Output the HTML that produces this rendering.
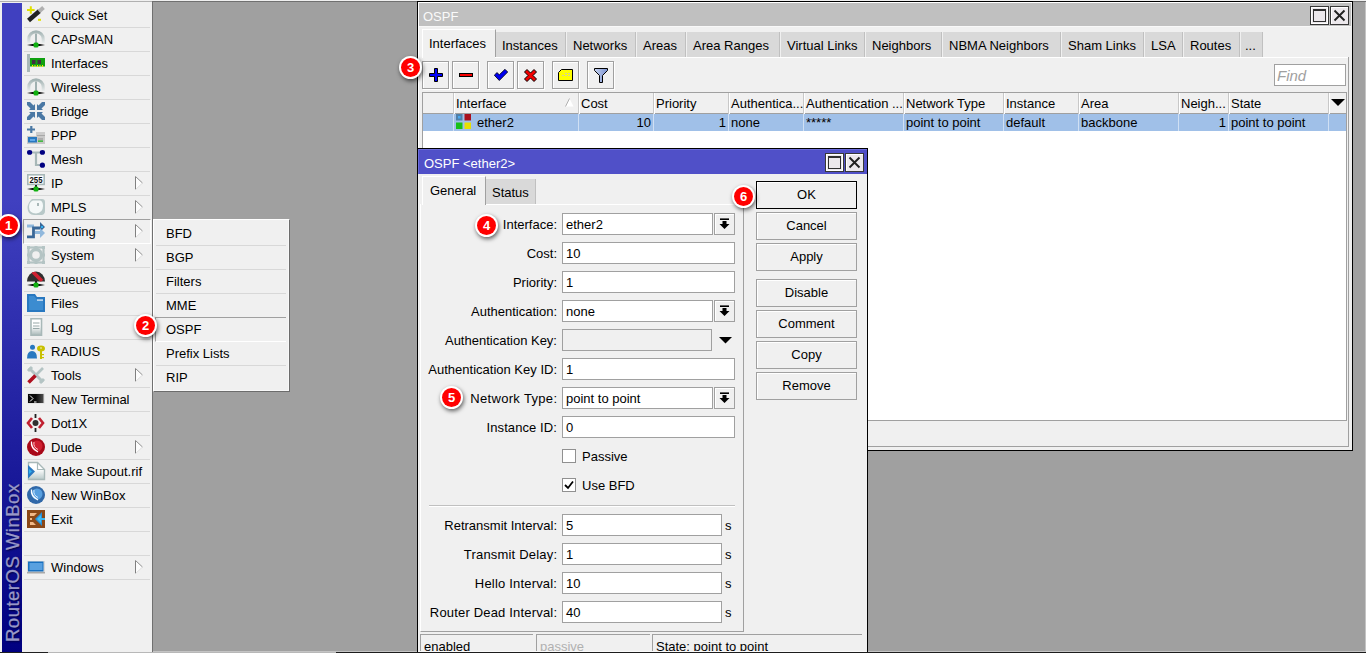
<!DOCTYPE html>
<html><head><meta charset="utf-8"><style>
*{box-sizing:border-box;margin:0;padding:0}
html,body{width:1366px;height:653px;overflow:hidden}
body{position:relative;background:#f0f0f0;font-family:"Liberation Sans",sans-serif;font-size:13px;color:#000}
.a{position:absolute}
.t{position:absolute;white-space:nowrap;line-height:15px}
svg{position:absolute;overflow:visible}
</style></head><body>
<div class="a" style="left:0px;top:1px;width:152px;height:1px;background:#b0b0b0"></div>
<div class="a" style="left:2px;top:3px;width:20px;height:650px;background:linear-gradient(to bottom,#4040c0 0px,#4040c0 197px,#000080 650px)"></div>
<div class="t" style="left:3px;top:642px;width:200px;height:20px;transform:rotate(-90deg);transform-origin:0 0;color:#9898c8;-webkit-text-stroke:0.3px #9898c8;text-shadow:-1px 1px 2px #000038;font-size:18.5px;letter-spacing:0.5px;line-height:20px">RouterOS WinBox</div>
<div class="a" style="left:24px;top:27px;width:126px;height:1px;background:#d8d8d8"></div>
<div class="t" style="left:51px;top:8px;">Quick Set</div>
<svg style="left:27px;top:6px" width="18" height="18" viewBox="0 0 18 18"><path d="M3.8 0.3V7.7M0 4H7.6" stroke="#e0e000" stroke-width="2"/><path d="M1.5 14.5 L12.5 5" stroke="#202020" stroke-width="4.5"/><path d="M12 5.5 L16.5 1.5" stroke="#b0b0b0" stroke-width="4"/><path d="M11 13.8H14" stroke="#e0e000" stroke-width="2"/></svg>
<div class="a" style="left:24px;top:51px;width:126px;height:1px;background:#d8d8d8"></div>
<div class="t" style="left:51px;top:32px;">CAPsMAN</div>
<svg style="left:27px;top:30px" width="18" height="18" viewBox="0 0 18 18"><defs><linearGradient id="barant" x1="0" x2="1"><stop offset="0" stop-color="#000" stop-opacity="0"/><stop offset="0.3" stop-color="#101010"/><stop offset="0.7" stop-color="#101010"/><stop offset="1" stop-color="#000" stop-opacity="0"/></linearGradient><linearGradient id="arc" x1="0" y1="0" x2="0" y2="1"><stop offset="0" stop-color="#a4b4b4"/><stop offset="1" stop-color="#e8ecec"/></linearGradient></defs><path d="M1.8 13 V9 A7.2 7.2 0 0 1 16.2 9 V13" fill="none" stroke="url(#arc)" stroke-width="3"/><rect x="8" y="3.5" width="2" height="10" fill="#a0b0b0"/><rect x="0" y="14" width="18" height="2" fill="url(#barant)"/><rect x="6.5" y="12.5" width="5" height="5" rx="1.5" fill="#10b010"/></svg>
<div class="a" style="left:24px;top:75px;width:126px;height:1px;background:#d8d8d8"></div>
<div class="t" style="left:51px;top:56px;">Interfaces</div>
<svg style="left:27px;top:54px" width="18" height="18" viewBox="0 0 18 18"><rect x="0" y="0" width="3" height="18" fill="#a8b8b8"/><rect x="3" y="4" width="15" height="8.5" fill="#10a010"/><rect x="5" y="6" width="3.5" height="4" fill="#403040"/><rect x="10.5" y="6" width="3.5" height="4" fill="#403040"/><path d="M5.5 11v2M8 11v2M10.5 11v2M13 11v2M15.5 11v2" stroke="#f0f000" stroke-width="1"/></svg>
<div class="a" style="left:24px;top:99px;width:126px;height:1px;background:#d8d8d8"></div>
<div class="t" style="left:51px;top:80px;">Wireless</div>
<svg style="left:27px;top:78px" width="18" height="18" viewBox="0 0 18 18"><defs><linearGradient id="barant" x1="0" x2="1"><stop offset="0" stop-color="#000" stop-opacity="0"/><stop offset="0.3" stop-color="#101010"/><stop offset="0.7" stop-color="#101010"/><stop offset="1" stop-color="#000" stop-opacity="0"/></linearGradient><linearGradient id="arc" x1="0" y1="0" x2="0" y2="1"><stop offset="0" stop-color="#a4b4b4"/><stop offset="1" stop-color="#e8ecec"/></linearGradient></defs><path d="M1.8 13 V9 A7.2 7.2 0 0 1 16.2 9 V13" fill="none" stroke="url(#arc)" stroke-width="3"/><rect x="8" y="3.5" width="2" height="10" fill="#a0b0b0"/><rect x="0" y="14" width="18" height="2" fill="url(#barant)"/><rect x="6.5" y="12.5" width="5" height="5" rx="1.5" fill="#10b010"/></svg>
<div class="a" style="left:24px;top:123px;width:126px;height:1px;background:#d8d8d8"></div>
<div class="t" style="left:51px;top:104px;">Bridge</div>
<svg style="left:27px;top:102px" width="18" height="18" viewBox="0 0 18 18"><g fill="#4a78a4"><path d="M0 0H3L8 5V8H5L0 3Z"/><path d="M8 2V8H2Z"/><path d="M18 0H15L10 5V8H13L18 3Z"/><path d="M10 2V8H16Z"/><path d="M0 18H3L8 13V10H5L0 15Z"/><path d="M8 16V10H2Z"/><path d="M18 18H15L10 13V10H13L18 15Z"/><path d="M10 16V10H16Z"/></g></svg>
<div class="a" style="left:24px;top:147px;width:126px;height:1px;background:#d8d8d8"></div>
<div class="t" style="left:51px;top:128px;">PPP</div>
<svg style="left:27px;top:126px" width="18" height="18" viewBox="0 0 18 18"><path d="M0 3.5H8M4.3 0V7" stroke="#4a78a4" stroke-width="2.2"/><rect x="9" y="6" width="9" height="12" fill="#cccccc"/><rect x="10" y="9" width="8" height="2" fill="#a8a8a8"/><rect x="0" y="10" width="18" height="8" fill="#c8c8c8"/><rect x="1" y="11" width="9" height="5.5" fill="#2878c0"/><rect x="3" y="13" width="5" height="2" fill="#60a8e8"/><rect x="11" y="12.5" width="5" height="1" fill="#909090"/><rect x="11" y="14.5" width="5" height="1.2" fill="#10b010"/></svg>
<div class="a" style="left:24px;top:171px;width:126px;height:1px;background:#d8d8d8"></div>
<div class="t" style="left:51px;top:152px;">Mesh</div>
<svg style="left:27px;top:150px" width="18" height="18" viewBox="0 0 18 18"><path d="M4 2.5H14M9 2.5V15H14" fill="none" stroke="#a8b8b8" stroke-width="2.2"/><ellipse cx="2.6" cy="2.4" rx="2.6" ry="2.4" fill="#000080"/><ellipse cx="15.4" cy="2.4" rx="2.6" ry="2.4" fill="#000080"/><ellipse cx="15.4" cy="15.2" rx="2.6" ry="2.6" fill="#000080"/></svg>
<div class="a" style="left:24px;top:195px;width:126px;height:1px;background:#d8d8d8"></div>
<div class="t" style="left:51px;top:176px;">IP</div>
<svg style="left:27px;top:174px" width="18" height="18" viewBox="0 0 18 18"><defs><linearGradient id="barip" x1="0" x2="1"><stop offset="0" stop-color="#000" stop-opacity="0"/><stop offset="0.3" stop-color="#101010"/><stop offset="0.7" stop-color="#101010"/><stop offset="1" stop-color="#000" stop-opacity="0"/></linearGradient></defs><rect x="0.8" y="0.8" width="16.4" height="9.6" fill="#fff" stroke="#a8b8b8" stroke-width="1.6"/><text x="9" y="8.6" font-family="Liberation Sans" font-size="9.5" font-weight="bold" text-anchor="middle" fill="#101010" textLength="13" lengthAdjust="spacingAndGlyphs">255</text><rect x="8" y="11" width="2" height="3" fill="#202020"/><rect x="0" y="14" width="18" height="2" fill="url(#barip)"/><rect x="6.5" y="12.5" width="5" height="5" rx="1.5" fill="#10b010"/></svg>
<svg style="left:135px;top:176px" width="8" height="15" viewBox="0 0 8 15"><path d="M0.5 0.5 L7.5 7 L0.5 13.5 Z" fill="#fcfcfc"/><path d="M0.5 0.5 V13.5" stroke="#808080" stroke-width="1"/><path d="M0.5 0.5 L7.5 7" stroke="#909090" stroke-width="1"/><path d="M0.5 13.5 L7.5 7" stroke="#e0e0e0" stroke-width="1"/></svg>
<div class="a" style="left:24px;top:219px;width:126px;height:1px;background:#d8d8d8"></div>
<div class="t" style="left:51px;top:200px;">MPLS</div>
<svg style="left:27px;top:198px" width="18" height="18" viewBox="0 0 18 18"><path d="M5 1H15Q18 1 18 4V13Q18 16 15 17H7Q1 17 0.5 10Q0.5 5 5 1Z" fill="#b8c8c8"/><path d="M6 2.5H13Q16 3 16 8Q16 15 9 15.5Q2 15 2 9Q2 4 6 2.5Z" fill="#f4f8f8"/><rect x="10" y="5" width="2" height="3" fill="#a8b8b8"/></svg>
<svg style="left:135px;top:200px" width="8" height="15" viewBox="0 0 8 15"><path d="M0.5 0.5 L7.5 7 L0.5 13.5 Z" fill="#fcfcfc"/><path d="M0.5 0.5 V13.5" stroke="#808080" stroke-width="1"/><path d="M0.5 0.5 L7.5 7" stroke="#909090" stroke-width="1"/><path d="M0.5 13.5 L7.5 7" stroke="#e0e0e0" stroke-width="1"/></svg>
<div class="a" style="left:24px;top:243px;width:126px;height:1px;background:#d8d8d8"></div>
<div class="t" style="left:51px;top:224px;">Routing</div>
<svg style="left:27px;top:222px" width="18" height="18" viewBox="0 0 18 18"><rect x="0" y="2.5" width="7" height="3" fill="#90b8dc"/><path d="M0 14.8H6.5V6H14" fill="none" stroke="#3a6898" stroke-width="2.8"/><path d="M13 0V10L18 5Z" fill="#3a6898"/><path d="M8 10.5H14" stroke="#90b8dc" stroke-width="3"/><path d="M13 6V16L18 11Z" fill="#90b8dc"/><rect x="14" y="4" width="2" height="2" fill="#30b0f0"/></svg>
<svg style="left:135px;top:224px" width="8" height="15" viewBox="0 0 8 15"><path d="M0.5 0.5 L7.5 7 L0.5 13.5 Z" fill="#fcfcfc"/><path d="M0.5 0.5 V13.5" stroke="#808080" stroke-width="1"/><path d="M0.5 0.5 L7.5 7" stroke="#909090" stroke-width="1"/><path d="M0.5 13.5 L7.5 7" stroke="#e0e0e0" stroke-width="1"/></svg>
<div class="a" style="left:24px;top:267px;width:126px;height:1px;background:#d8d8d8"></div>
<div class="t" style="left:51px;top:248px;">System</div>
<svg style="left:27px;top:246px" width="18" height="18" viewBox="0 0 18 18"><g fill="none" stroke="#b4c4c4"><circle cx="9" cy="9" r="5.5" stroke-width="3.4"/><rect x="1.5" y="1.5" width="15" height="15" stroke-width="2.2"/></g><g fill="#b4c4c4"><rect x="0" y="0" width="3" height="3"/><rect x="15" y="0" width="3" height="3"/><rect x="0" y="15" width="3" height="3"/><rect x="15" y="15" width="3" height="3"/><rect x="7.5" y="0" width="3" height="2"/><rect x="7.5" y="16" width="3" height="2"/><rect x="0" y="7.5" width="2" height="3"/><rect x="16" y="7.5" width="2" height="3"/></g></svg>
<svg style="left:135px;top:248px" width="8" height="15" viewBox="0 0 8 15"><path d="M0.5 0.5 L7.5 7 L0.5 13.5 Z" fill="#fcfcfc"/><path d="M0.5 0.5 V13.5" stroke="#808080" stroke-width="1"/><path d="M0.5 0.5 L7.5 7" stroke="#909090" stroke-width="1"/><path d="M0.5 13.5 L7.5 7" stroke="#e0e0e0" stroke-width="1"/></svg>
<div class="a" style="left:24px;top:291px;width:126px;height:1px;background:#d8d8d8"></div>
<div class="t" style="left:51px;top:272px;">Queues</div>
<svg style="left:27px;top:270px" width="18" height="18" viewBox="0 0 18 18"><defs><linearGradient id="barq" x1="0" x2="1"><stop offset="0" stop-color="#000" stop-opacity="0"/><stop offset="0.3" stop-color="#101010"/><stop offset="0.7" stop-color="#101010"/><stop offset="1" stop-color="#000" stop-opacity="0"/></linearGradient><clipPath id="qc"><path d="M0 11.5 A9 10 0 0 1 18 11.5Z"/></clipPath></defs><path d="M0 11.5 A9 10 0 0 1 18 11.5Z" fill="#303030"/><g clip-path="url(#qc)"><path d="M5 1 L15 11" stroke="#d02030" stroke-width="3.6"/></g><rect x="8" y="11" width="2" height="3" fill="#202020"/><rect x="0" y="14" width="18" height="2" fill="url(#barq)"/><rect x="6.5" y="12.5" width="5" height="5" rx="1.5" fill="#10b010"/></svg>
<div class="a" style="left:24px;top:315px;width:126px;height:1px;background:#d8d8d8"></div>
<div class="t" style="left:51px;top:296px;">Files</div>
<svg style="left:27px;top:294px" width="18" height="18" viewBox="0 0 18 18"><path d="M0 0H8L10 3H18V18H0Z" fill="#2878c0"/><path d="M2 2H7L9.5 5H16V16H2Z" fill="#3c8cd0"/><rect x="10" y="5.5" width="6" height="1.2" fill="#e8f0f8"/></svg>
<div class="a" style="left:24px;top:339px;width:126px;height:1px;background:#d8d8d8"></div>
<div class="t" style="left:51px;top:320px;">Log</div>
<svg style="left:27px;top:318px" width="18" height="18" viewBox="0 0 18 18"><defs><linearGradient id="lg" x1="0" y1="0" x2="0" y2="1"><stop offset="0.45" stop-color="#fff"/><stop offset="1" stop-color="#a8b8b8"/></linearGradient></defs><path d="M4 0.8H14.5V17.2H4Z" fill="url(#lg)" stroke="#a8b8b8" stroke-width="1.6"/><path d="M6 5H12.5M6 8H12.5M6 10.5H12.5" stroke="#98a8a8" stroke-width="1.2"/></svg>
<div class="a" style="left:24px;top:363px;width:126px;height:1px;background:#d8d8d8"></div>
<div class="t" style="left:51px;top:344px;">RADIUS</div>
<svg style="left:27px;top:342px" width="18" height="18" viewBox="0 0 18 18"><circle cx="5.5" cy="5.2" r="2.5" fill="#2878c0"/><path d="M0 16.5Q0 9 5 9Q10 9 10 16.5Z" fill="#2878c0"/><ellipse cx="14" cy="6.5" rx="4" ry="3" fill="#c8c000"/><rect x="13" y="8" width="2" height="9" fill="#c8c000"/><rect x="15" y="12" width="2" height="1.2" fill="#c8c000"/><rect x="15" y="15" width="2" height="1.2" fill="#c8c000"/><rect x="13" y="5.5" width="2" height="1" fill="#f0f0c0"/></svg>
<div class="a" style="left:24px;top:387px;width:126px;height:1px;background:#d8d8d8"></div>
<div class="t" style="left:51px;top:368px;">Tools</div>
<svg style="left:27px;top:366px" width="18" height="18" viewBox="0 0 18 18"><path d="M2 2 L16 16" stroke="#b4c4c4" stroke-width="3"/><path d="M16 2 L2 16" stroke="#b4c4c4" stroke-width="2.6"/><path d="M1 5 L5 1 M13 17 L17 13" stroke="#b4c4c4" stroke-width="3"/><path d="M1.5 16.5 L8.5 9.5" stroke="#b01020" stroke-width="3.6"/></svg>
<svg style="left:135px;top:368px" width="8" height="15" viewBox="0 0 8 15"><path d="M0.5 0.5 L7.5 7 L0.5 13.5 Z" fill="#fcfcfc"/><path d="M0.5 0.5 V13.5" stroke="#808080" stroke-width="1"/><path d="M0.5 0.5 L7.5 7" stroke="#909090" stroke-width="1"/><path d="M0.5 13.5 L7.5 7" stroke="#e0e0e0" stroke-width="1"/></svg>
<div class="a" style="left:24px;top:411px;width:126px;height:1px;background:#d8d8d8"></div>
<div class="t" style="left:51px;top:392px;">New Terminal</div>
<svg style="left:27px;top:390px" width="18" height="18" viewBox="0 0 18 18"><rect x="0.5" y="3.5" width="17" height="10" fill="#d8d8d8"/><defs><linearGradient id="tg" x1="0" x2="1"><stop offset="0.5" stop-color="#080808"/><stop offset="1" stop-color="#505050"/></linearGradient></defs><rect x="1" y="4" width="15.5" height="9" fill="url(#tg)"/><path d="M3 5.5L6 8.5L3 11.5M7 12H9.5" fill="none" stroke="#fff" stroke-width="1"/></svg>
<div class="a" style="left:24px;top:435px;width:126px;height:1px;background:#d8d8d8"></div>
<div class="t" style="left:51px;top:416px;">Dot1X</div>
<svg style="left:27px;top:414px" width="18" height="18" viewBox="0 0 18 18"><path d="M5 4L1 9L5 14" fill="none" stroke="#c02030" stroke-width="2.6"/><path d="M12 4L16 9L12 14" fill="none" stroke="#c02030" stroke-width="2.6"/><path d="M8.5 0V4M8.5 14V18" stroke="#202020" stroke-width="1.8"/><circle cx="8.5" cy="9" r="3" fill="#303030"/></svg>
<div class="a" style="left:24px;top:459px;width:126px;height:1px;background:#d8d8d8"></div>
<div class="t" style="left:51px;top:440px;">Dude</div>
<svg style="left:27px;top:438px" width="18" height="18" viewBox="0 0 18 18"><circle cx="9" cy="9" r="9" fill="#a80818"/><circle cx="10" cy="8" r="5.5" fill="#d02030"/><path d="M4.5 3.5Q3.5 10 11 14" fill="none" stroke="#fff" stroke-width="1.3"/><path d="M7 4Q6 9 11 11.5" fill="none" stroke="#f8c0c0" stroke-width="1"/></svg>
<svg style="left:135px;top:440px" width="8" height="15" viewBox="0 0 8 15"><path d="M0.5 0.5 L7.5 7 L0.5 13.5 Z" fill="#fcfcfc"/><path d="M0.5 0.5 V13.5" stroke="#808080" stroke-width="1"/><path d="M0.5 0.5 L7.5 7" stroke="#909090" stroke-width="1"/><path d="M0.5 13.5 L7.5 7" stroke="#e0e0e0" stroke-width="1"/></svg>
<div class="a" style="left:24px;top:483px;width:126px;height:1px;background:#d8d8d8"></div>
<div class="t" style="left:51px;top:464px;">Make Supout.rif</div>
<svg style="left:27px;top:462px" width="18" height="18" viewBox="0 0 18 18"><defs><linearGradient id="sg" x1="0" y1="0" x2="0" y2="1"><stop offset="0.4" stop-color="#fff"/><stop offset="1" stop-color="#b8c8c8"/></linearGradient></defs><path d="M1.5 0.5H10.5L17.5 7.5V17.5H1.5Z" fill="url(#sg)" stroke="#a8b8b8" stroke-width="1.4"/><path d="M10.5 0.5V7.5H17.5" fill="none" stroke="#a8b8b8" stroke-width="1.2"/><path d="M1 3L8 9.5L1 16.5Z" fill="#2878c0"/><path d="M2 7L5 9.5L2 12Z" fill="#30b0f0"/></svg>
<div class="a" style="left:24px;top:507px;width:126px;height:1px;background:#d8d8d8"></div>
<div class="t" style="left:51px;top:488px;">New WinBox</div>
<svg style="left:27px;top:486px" width="18" height="18" viewBox="0 0 18 18"><circle cx="9" cy="9" r="9" fill="#3068a8"/><circle cx="10" cy="8" r="5.5" fill="#58a0e0"/><path d="M4.5 3.5Q3.5 10 11 14" fill="none" stroke="#fff" stroke-width="1.3"/><path d="M7 4Q6 9 11 11.5" fill="none" stroke="#d0e8ff" stroke-width="1"/></svg>
<div class="a" style="left:24px;top:531px;width:126px;height:1px;background:#d8d8d8"></div>
<div class="t" style="left:51px;top:512px;">Exit</div>
<svg style="left:27px;top:510px" width="18" height="18" viewBox="0 0 18 18"><rect x="0" y="0" width="18" height="18" fill="#8a4818"/><path d="M3 3H10L7 6H3Z M3 8H5V10H3Z M3 12H6L9 15H3Z" fill="#f0b888"/><path d="M15 2V16L8 9Z" fill="#2890d8"/><path d="M14 5V13L10 9Z" fill="#40c0f8"/><rect x="13" y="8" width="5" height="2" fill="#40b8f0"/></svg>
<div class="a" style="left:24px;top:555px;width:126px;height:1px;background:#d8d8d8"></div>
<div class="a" style="left:24px;top:579px;width:126px;height:1px;background:#d8d8d8"></div>
<div class="t" style="left:51px;top:560px;">Windows</div>
<svg style="left:27px;top:558px" width="18" height="18" viewBox="0 0 18 18"><rect x="0" y="3" width="18" height="12" fill="#d8d8d8"/><rect x="0" y="14" width="18" height="1.5" fill="#a8a8a8"/><rect x="1" y="3.5" width="15.5" height="10" fill="#1870c0"/><rect x="2.5" y="5" width="13" height="7" fill="#58a0e0"/></svg>
<svg style="left:135px;top:560px" width="8" height="15" viewBox="0 0 8 15"><path d="M0.5 0.5 L7.5 7 L0.5 13.5 Z" fill="#fcfcfc"/><path d="M0.5 0.5 V13.5" stroke="#808080" stroke-width="1"/><path d="M0.5 0.5 L7.5 7" stroke="#909090" stroke-width="1"/><path d="M0.5 13.5 L7.5 7" stroke="#e0e0e0" stroke-width="1"/></svg>
<div class="a" style="left:23px;top:219px;width:128px;height:25px;border-top:1px solid #a0a0a0;border-left:1px solid #a0a0a0;border-bottom:1px solid #fff;border-right:1px solid #fff"></div>
<div class="a" style="left:152px;top:1px;width:1214px;height:652px;background:#a0a0a0;border-left:1px solid #707070;border-top:1px solid #707070"></div>
<div class="a" style="left:153px;top:219px;width:137px;height:173px;background:#f0f0f0;border-top:1px solid #fff;border-left:1px solid #fff;border-right:1px solid #6c6c6c;border-bottom:1px solid #6c6c6c;box-shadow:inset -1px -1px 0 #f8f8f8"></div>
<div class="a" style="left:156px;top:245px;width:130px;height:1px;background:#d8d8d8"></div>
<div class="t" style="left:166px;top:226px;">BFD</div>
<div class="a" style="left:156px;top:269px;width:130px;height:1px;background:#d8d8d8"></div>
<div class="t" style="left:166px;top:250px;">BGP</div>
<div class="a" style="left:156px;top:293px;width:130px;height:1px;background:#d8d8d8"></div>
<div class="t" style="left:166px;top:274px;">Filters</div>
<div class="a" style="left:156px;top:317px;width:130px;height:1px;background:#d8d8d8"></div>
<div class="t" style="left:166px;top:298px;">MME</div>
<div class="a" style="left:156px;top:341px;width:130px;height:1px;background:#d8d8d8"></div>
<div class="t" style="left:166px;top:322px;">OSPF</div>
<div class="a" style="left:156px;top:365px;width:130px;height:1px;background:#d8d8d8"></div>
<div class="t" style="left:166px;top:346px;">Prefix Lists</div>
<div class="t" style="left:166px;top:370px;">RIP</div>
<div class="a" style="left:155px;top:317px;width:131px;height:25px;border-top:1px solid #a0a0a0;border-left:1px solid #a0a0a0;border-bottom:1px solid #fff"></div>
<div class="a" style="left:417px;top:1px;width:936px;height:450px;background:#f0f0f0;border:1px solid #000"></div>
<div class="a" style="left:418px;top:2px;width:934px;height:1px;background:#fff"></div>
<div class="a" style="left:418px;top:2px;width:1px;height:448px;background:#fff"></div>
<div class="a" style="left:419px;top:3px;width:932px;height:23px;background:#c0c0c0"></div>
<div class="a" style="left:419px;top:26px;width:932px;height:1px;background:#f8f8f8"></div>
<div class="t" style="left:423px;top:9px;color:#fafafa">OSPF</div>
<div class="a" style="left:1310px;top:6px;width:19px;height:19px;border:1px solid #383838;background:#ece8ec;box-shadow:inset 1px 1px 0 #fff,inset -1px -1px 0 #fff"></div>
<div class="a" style="left:1313px;top:9px;width:13px;height:13px;border:1px solid #303030;border-top-width:2px"></div>
<div class="a" style="left:1330px;top:6px;width:19px;height:19px;border:1px solid #383838;background:#ece8ec;box-shadow:inset 1px 1px 0 #fff"></div>
<svg style="left:1330px;top:6px" width="19" height="19"><path d="M4.5 4.5 L14.5 14.5 M14.5 4.5 L4.5 14.5" stroke="#202020" stroke-width="1.9"/></svg>
<div class="a" style="left:422px;top:29px;width:74px;height:29px;background:#f0f0f0;border-top:1px solid #fff;border-left:1px solid #fff;border-right:1px solid #a0a0a0"></div>
<div class="t" style="left:429px;top:36px;">Interfaces</div>
<div class="a" style="left:496px;top:32px;width:70px;height:25px;background:#d9d9d9;border-right:1px solid #c0c0c0"></div>
<div class="t" style="left:502px;top:38px;">Instances</div>
<div class="a" style="left:567px;top:32px;width:69px;height:25px;background:#d9d9d9;border-right:1px solid #c0c0c0"></div>
<div class="t" style="left:573px;top:38px;">Networks</div>
<div class="a" style="left:637px;top:32px;width:49px;height:25px;background:#d9d9d9;border-right:1px solid #c0c0c0"></div>
<div class="t" style="left:643px;top:38px;">Areas</div>
<div class="a" style="left:687px;top:32px;width:93px;height:25px;background:#d9d9d9;border-right:1px solid #c0c0c0"></div>
<div class="t" style="left:693px;top:38px;">Area Ranges</div>
<div class="a" style="left:781px;top:32px;width:84px;height:25px;background:#d9d9d9;border-right:1px solid #c0c0c0"></div>
<div class="t" style="left:787px;top:38px;">Virtual Links</div>
<div class="a" style="left:866px;top:32px;width:76px;height:25px;background:#d9d9d9;border-right:1px solid #c0c0c0"></div>
<div class="t" style="left:872px;top:38px;">Neighbors</div>
<div class="a" style="left:943px;top:32px;width:118px;height:25px;background:#d9d9d9;border-right:1px solid #c0c0c0"></div>
<div class="t" style="left:949px;top:38px;">NBMA Neighbors</div>
<div class="a" style="left:1062px;top:32px;width:82px;height:25px;background:#d9d9d9;border-right:1px solid #c0c0c0"></div>
<div class="t" style="left:1068px;top:38px;">Sham Links</div>
<div class="a" style="left:1145px;top:32px;width:38px;height:25px;background:#d9d9d9;border-right:1px solid #c0c0c0"></div>
<div class="t" style="left:1151px;top:38px;">LSA</div>
<div class="a" style="left:1184px;top:32px;width:56px;height:25px;background:#d9d9d9;border-right:1px solid #c0c0c0"></div>
<div class="t" style="left:1190px;top:38px;">Routes</div>
<div class="a" style="left:1241px;top:32px;width:22px;height:25px;background:#d9d9d9;border-right:1px solid #c0c0c0"></div>
<div class="t" style="left:1245px;top:38px;">...</div>
<div class="a" style="left:420px;top:57px;width:929px;height:390px;border-right:1px solid #a0a0a0;border-bottom:1px solid #a0a0a0"></div>
<div class="a" style="left:495px;top:57px;width:853px;height:1px;background:#fff"></div>
<div class="a" style="left:422px;top:61px;width:27px;height:28px;background:#f0f0f0;border:1px solid #a0a0a0;box-shadow:inset 1px 1px 0 #fff,1px 1px 0 #fff"></div>
<div class="a" style="left:452px;top:61px;width:27px;height:28px;background:#f0f0f0;border:1px solid #a0a0a0;box-shadow:inset 1px 1px 0 #fff,1px 1px 0 #fff"></div>
<div class="a" style="left:487px;top:61px;width:27px;height:28px;background:#f0f0f0;border:1px solid #a0a0a0;box-shadow:inset 1px 1px 0 #fff,1px 1px 0 #fff"></div>
<div class="a" style="left:517px;top:61px;width:27px;height:28px;background:#f0f0f0;border:1px solid #a0a0a0;box-shadow:inset 1px 1px 0 #fff,1px 1px 0 #fff"></div>
<div class="a" style="left:552px;top:61px;width:27px;height:28px;background:#f0f0f0;border:1px solid #a0a0a0;box-shadow:inset 1px 1px 0 #fff,1px 1px 0 #fff"></div>
<div class="a" style="left:587px;top:61px;width:27px;height:28px;background:#f0f0f0;border:1px solid #a0a0a0;box-shadow:inset 1px 1px 0 #fff,1px 1px 0 #fff"></div>
<svg style="left:429px;top:68px" width="14" height="14" viewBox="0 0 14 14"><path d="M5.5 0.5H8.5V5.5H13.5V8.5H8.5V13.5H5.5V8.5H0.5V5.5H5.5Z" fill="#0000f8" stroke="#000" stroke-width="1"/></svg>
<svg style="left:459px;top:73px" width="14" height="5" viewBox="0 0 14 5"><rect x="0.5" y="0.5" width="13" height="3" fill="#f80000" stroke="#000"/></svg>
<svg style="left:494px;top:69px" width="14" height="12" viewBox="0 0 14 12"><path d="M0.3 6.2 L3 3.6 L5.3 5.8 L11 0.3 L13.7 3 L5.3 11.5 Z" fill="#0000f0" stroke="#000" stroke-width="0.8"/></svg>
<svg style="left:524px;top:69px" width="13" height="13" viewBox="0 0 13 13"><path d="M0.5 3 L3 0.5 L6.5 4 L10 0.5 L12.5 3 L9 6.5 L12.5 10 L10 12.5 L6.5 9 L3 12.5 L0.5 10 L4 6.5 Z" fill="#f00000" stroke="#000" stroke-width="1"/></svg>
<svg style="left:558px;top:69px" width="15" height="12" viewBox="0 0 15 12"><path d="M3.5 0.5 H14.5 V11.5 H0.5 V3.5 Z" fill="#ffff00" stroke="#000" stroke-width="1"/><path d="M7 4.5h2M10 4.5h2M4 6.5h2M7 6.5h2M10 6.5h2" stroke="#d0d0a0" stroke-width="1"/></svg>
<svg style="left:594px;top:68px" width="14" height="15" viewBox="0 0 14 15"><defs><linearGradient id="fg" x1="0" x2="1"><stop offset="0" stop-color="#c8d4f0"/><stop offset="1" stop-color="#7890d0"/></linearGradient></defs><path d="M0.5 0.5 H13.5 V2.5 L8.5 7.5 V14.5 H5.5 V7.5 L0.5 2.5 Z" fill="url(#fg)" stroke="#000" stroke-width="1"/></svg>
<div class="a" style="left:1274px;top:64px;width:72px;height:22px;background:#fff;border:1px solid #a0a0a0"></div>
<div class="t" style="left:1277px;top:68px;color:#a0a0a0;font-style:italic;font-size:15px">Find</div>
<div class="a" style="left:422px;top:92px;width:925px;height:329px;background:#fff;border:1px solid #a0a0a0"></div>
<div class="a" style="left:423px;top:93px;width:923px;height:21px;background:#f0f0f0;border-bottom:1px solid #a0a0a0"></div>
<div class="a" style="left:423px;top:114px;width:923px;height:17px;background:#a0c0e8"></div>
<div class="a" style="left:453px;top:93px;width:1px;height:21px;background:#c8c8c8"></div>
<div class="a" style="left:454px;top:93px;width:1px;height:21px;background:#fff"></div>
<div class="a" style="left:453px;top:114px;width:1px;height:17px;background:#d0e0f4"></div>
<div class="a" style="left:578px;top:93px;width:1px;height:21px;background:#c8c8c8"></div>
<div class="a" style="left:579px;top:93px;width:1px;height:21px;background:#fff"></div>
<div class="a" style="left:578px;top:114px;width:1px;height:17px;background:#d0e0f4"></div>
<div class="t" style="left:456px;top:96px;">Interface</div>
<div class="a" style="left:653px;top:93px;width:1px;height:21px;background:#c8c8c8"></div>
<div class="a" style="left:654px;top:93px;width:1px;height:21px;background:#fff"></div>
<div class="a" style="left:653px;top:114px;width:1px;height:17px;background:#d0e0f4"></div>
<div class="t" style="left:581px;top:96px;">Cost</div>
<div class="a" style="left:728px;top:93px;width:1px;height:21px;background:#c8c8c8"></div>
<div class="a" style="left:729px;top:93px;width:1px;height:21px;background:#fff"></div>
<div class="a" style="left:728px;top:114px;width:1px;height:17px;background:#d0e0f4"></div>
<div class="t" style="left:656px;top:96px;">Priority</div>
<div class="a" style="left:803px;top:93px;width:1px;height:21px;background:#c8c8c8"></div>
<div class="a" style="left:804px;top:93px;width:1px;height:21px;background:#fff"></div>
<div class="a" style="left:803px;top:114px;width:1px;height:17px;background:#d0e0f4"></div>
<div class="t" style="left:731px;top:96px;">Authentica...</div>
<div class="a" style="left:903px;top:93px;width:1px;height:21px;background:#c8c8c8"></div>
<div class="a" style="left:904px;top:93px;width:1px;height:21px;background:#fff"></div>
<div class="a" style="left:903px;top:114px;width:1px;height:17px;background:#d0e0f4"></div>
<div class="t" style="left:806px;top:96px;">Authentication ...</div>
<div class="a" style="left:1003px;top:93px;width:1px;height:21px;background:#c8c8c8"></div>
<div class="a" style="left:1004px;top:93px;width:1px;height:21px;background:#fff"></div>
<div class="a" style="left:1003px;top:114px;width:1px;height:17px;background:#d0e0f4"></div>
<div class="t" style="left:906px;top:96px;">Network Type</div>
<div class="a" style="left:1078px;top:93px;width:1px;height:21px;background:#c8c8c8"></div>
<div class="a" style="left:1079px;top:93px;width:1px;height:21px;background:#fff"></div>
<div class="a" style="left:1078px;top:114px;width:1px;height:17px;background:#d0e0f4"></div>
<div class="t" style="left:1006px;top:96px;">Instance</div>
<div class="a" style="left:1178px;top:93px;width:1px;height:21px;background:#c8c8c8"></div>
<div class="a" style="left:1179px;top:93px;width:1px;height:21px;background:#fff"></div>
<div class="a" style="left:1178px;top:114px;width:1px;height:17px;background:#d0e0f4"></div>
<div class="t" style="left:1081px;top:96px;">Area</div>
<div class="a" style="left:1228px;top:93px;width:1px;height:21px;background:#c8c8c8"></div>
<div class="a" style="left:1229px;top:93px;width:1px;height:21px;background:#fff"></div>
<div class="a" style="left:1228px;top:114px;width:1px;height:17px;background:#d0e0f4"></div>
<div class="t" style="left:1181px;top:96px;">Neigh...</div>
<div class="a" style="left:1328px;top:93px;width:1px;height:21px;background:#c8c8c8"></div>
<div class="a" style="left:1329px;top:93px;width:1px;height:21px;background:#fff"></div>
<div class="a" style="left:1328px;top:114px;width:1px;height:17px;background:#d0e0f4"></div>
<div class="t" style="left:1231px;top:96px;">State</div>
<svg style="left:565px;top:98px" width="10" height="9"><path d="M0.5 8.5 L4.5 0.5 L8.5 8.5 Z" fill="#fff"/><path d="M0.5 8.5 L4.5 0.5" stroke="#b0b0b0" stroke-width="1"/></svg>
<svg style="left:1331px;top:99px" width="14" height="8"><path d="M0 0 H14 L7 7 Z" fill="#000"/></svg>
<svg style="left:456px;top:114px" width="16" height="16"><rect x="0" y="0" width="6.5" height="6.5" fill="#4f7fa8"/><rect x="2" y="2" width="2.5" height="2.5" fill="#48a8f0"/><rect x="8.5" y="0" width="6.5" height="6.5" fill="#a8101c"/><rect x="0" y="8.5" width="6.5" height="6.5" fill="#18c018"/><rect x="8.5" y="8.5" width="6.5" height="6.5" fill="#e8e000"/></svg>
<div class="t" style="left:477px;top:115px;">ether2</div>
<div class="t" style="right:715px;top:115px;">10</div>
<div class="t" style="right:640px;top:115px;">1</div>
<div class="t" style="left:731px;top:115px;">none</div>
<div class="t" style="left:806px;top:115px;">*****</div>
<div class="t" style="left:906px;top:115px;">point to point</div>
<div class="t" style="left:1006px;top:115px;">default</div>
<div class="t" style="left:1081px;top:115px;">backbone</div>
<div class="t" style="right:140px;top:115px;">1</div>
<div class="t" style="left:1231px;top:115px;">point to point</div>
<div class="a" style="left:417px;top:148px;width:451px;height:510px;background:#f0f0f0;border:1px solid #000"></div>
<div class="a" style="left:418px;top:149px;width:449px;height:25px;background:#5050c8;box-shadow:inset 1px 1px 0 #6c6cdc"></div>
<div class="t" style="left:424px;top:156px;color:#fff">OSPF &lt;ether2&gt;</div>
<div class="a" style="left:825px;top:153px;width:19px;height:19px;border:1px solid #383838;background:#ece8ec;box-shadow:inset 1px 1px 0 #fff,inset -1px -1px 0 #fff"></div>
<div class="a" style="left:828px;top:156px;width:13px;height:13px;border:1px solid #303030;border-top-width:2px"></div>
<div class="a" style="left:845px;top:153px;width:19px;height:19px;border:1px solid #383838;background:#ece8ec;box-shadow:inset 1px 1px 0 #fff"></div>
<svg style="left:845px;top:153px" width="19" height="19"><path d="M4.5 4.5 L14.5 14.5 M14.5 4.5 L4.5 14.5" stroke="#202020" stroke-width="1.9"/></svg>
<div class="a" style="left:422px;top:176px;width:64px;height:29px;background:#f0f0f0;border-top:1px solid #fff;border-left:1px solid #fff;border-right:1px solid #a0a0a0"></div>
<div class="t" style="left:430px;top:183px;">General</div>
<div class="a" style="left:486px;top:179px;width:50px;height:25px;background:#d9d9d9;border-right:1px solid #c0c0c0"></div>
<div class="t" style="left:492px;top:185px;">Status</div>
<div class="a" style="left:420px;top:204px;width:324px;height:428px;border-left:1px solid #fff;border-right:1px solid #a0a0a0;border-bottom:1px solid #a0a0a0"></div>
<div class="a" style="left:486px;top:204px;width:258px;height:1px;background:#fff"></div>
<div class="t" style="right:809px;top:217px;">Interface:</div>
<div class="a" style="left:562px;top:213px;width:151px;height:22px;background:#fff;border:1px solid #a0a0a0"></div>
<div class="a" style="left:714px;top:213px;width:21px;height:22px;background:#f0f0f0;border:1px solid #a0a0a0;box-shadow:inset 1px 1px 0 #fff"></div>
<svg style="left:719px;top:218px" width="11" height="12"><path d="M1 1.2H10" stroke="#000" stroke-width="1.6"/><path d="M3.5 3V6H0.5L5.5 11L10.5 6H7.5V3Z" fill="#000"/></svg>
<div class="t" style="left:566px;top:217px;">ether2</div>
<div class="t" style="right:809px;top:246px;">Cost:</div>
<div class="a" style="left:562px;top:242px;width:173px;height:22px;background:#fff;border:1px solid #a0a0a0"></div>
<div class="t" style="left:566px;top:246px;">10</div>
<div class="t" style="right:809px;top:275px;">Priority:</div>
<div class="a" style="left:562px;top:271px;width:173px;height:22px;background:#fff;border:1px solid #a0a0a0"></div>
<div class="t" style="left:566px;top:275px;">1</div>
<div class="t" style="right:809px;top:304px;">Authentication:</div>
<div class="a" style="left:562px;top:300px;width:151px;height:22px;background:#fff;border:1px solid #a0a0a0"></div>
<div class="a" style="left:714px;top:300px;width:21px;height:22px;background:#f0f0f0;border:1px solid #a0a0a0;box-shadow:inset 1px 1px 0 #fff"></div>
<svg style="left:719px;top:305px" width="11" height="12"><path d="M1 1.2H10" stroke="#000" stroke-width="1.6"/><path d="M3.5 3V6H0.5L5.5 11L10.5 6H7.5V3Z" fill="#000"/></svg>
<div class="t" style="left:566px;top:304px;">none</div>
<div class="t" style="right:809px;top:333px;">Authentication Key:</div>
<div class="a" style="left:562px;top:329px;width:150px;height:22px;background:#f0f0f0;border:1px solid #a0a0a0"></div>
<svg style="left:719px;top:337px" width="13" height="7"><path d="M0 0H13L6.5 6.5Z" fill="#000"/></svg>
<div class="t" style="right:809px;top:362px;">Authentication Key ID:</div>
<div class="a" style="left:562px;top:358px;width:173px;height:22px;background:#fff;border:1px solid #a0a0a0"></div>
<div class="t" style="left:566px;top:362px;">1</div>
<div class="t" style="right:809px;top:391px;letter-spacing:0.33px;margin-right:-0.33px">Network Type:</div>
<div class="a" style="left:562px;top:387px;width:151px;height:22px;background:#fff;border:1px solid #a0a0a0"></div>
<div class="a" style="left:714px;top:387px;width:21px;height:22px;background:#f0f0f0;border:1px solid #a0a0a0;box-shadow:inset 1px 1px 0 #fff"></div>
<svg style="left:719px;top:392px" width="11" height="12"><path d="M1 1.2H10" stroke="#000" stroke-width="1.6"/><path d="M3.5 3V6H0.5L5.5 11L10.5 6H7.5V3Z" fill="#000"/></svg>
<div class="t" style="left:566px;top:391px;">point to point</div>
<div class="t" style="right:809px;top:420px;letter-spacing:0.09px">Instance ID:</div>
<div class="a" style="left:562px;top:416px;width:173px;height:22px;background:#fff;border:1px solid #a0a0a0"></div>
<div class="t" style="left:566px;top:420px;">0</div>
<div class="a" style="left:562px;top:449px;width:14px;height:14px;background:#fff;border:1px solid #909090"></div>
<div class="t" style="left:582px;top:449px;">Passive</div>
<div class="a" style="left:562px;top:478px;width:14px;height:14px;background:#fff;border:1px solid #909090"></div>
<svg style="left:564px;top:480px" width="10" height="10"><path d="M1 5 L4 8 L9 1.5" fill="none" stroke="#000" stroke-width="1.8"/></svg>
<div class="t" style="left:582px;top:478px;">Use BFD</div>
<div class="a" style="left:429px;top:505px;width:306px;height:1px;background:#c0c0c0"></div>
<div class="a" style="left:429px;top:506px;width:306px;height:1px;background:#fff"></div>
<div class="t" style="right:809px;top:518px;">Retransmit Interval:</div>
<div class="a" style="left:562px;top:514px;width:160px;height:22px;background:#fff;border:1px solid #a0a0a0"></div>
<div class="t" style="left:566px;top:518px;">5</div>
<div class="t" style="left:725px;top:518px;">s</div>
<div class="t" style="right:809px;top:547px;letter-spacing:0.19px;margin-right:-0.19px">Transmit Delay:</div>
<div class="a" style="left:562px;top:543px;width:160px;height:22px;background:#fff;border:1px solid #a0a0a0"></div>
<div class="t" style="left:566px;top:547px;">1</div>
<div class="t" style="left:725px;top:547px;">s</div>
<div class="t" style="right:809px;top:576px;letter-spacing:0.19px;margin-right:-0.19px">Hello Interval:</div>
<div class="a" style="left:562px;top:572px;width:160px;height:22px;background:#fff;border:1px solid #a0a0a0"></div>
<div class="t" style="left:566px;top:576px;">10</div>
<div class="t" style="left:725px;top:576px;">s</div>
<div class="t" style="right:809px;top:605px;letter-spacing:0.18px;margin-right:-0.18px">Router Dead Interval:</div>
<div class="a" style="left:562px;top:601px;width:160px;height:22px;background:#fff;border:1px solid #a0a0a0"></div>
<div class="t" style="left:566px;top:605px;">40</div>
<div class="t" style="left:725px;top:605px;">s</div>
<div class="a" style="left:756px;top:181px;width:101px;height:28px;background:#f0f0f0;border:1px solid #000;box-shadow:inset 1px 1px 0 #fff"></div>
<div class="t" style="left:756px;top:187px;width:101px;text-align:center">OK</div>
<div class="a" style="left:756px;top:212px;width:101px;height:28px;background:#f0f0f0;border:1px solid #a0a0a0;box-shadow:inset 1px 1px 0 #fff"></div>
<div class="t" style="left:756px;top:218px;width:101px;text-align:center">Cancel</div>
<div class="a" style="left:756px;top:243px;width:101px;height:28px;background:#f0f0f0;border:1px solid #a0a0a0;box-shadow:inset 1px 1px 0 #fff"></div>
<div class="t" style="left:756px;top:249px;width:101px;text-align:center">Apply</div>
<div class="a" style="left:756px;top:279px;width:101px;height:28px;background:#f0f0f0;border:1px solid #a0a0a0;box-shadow:inset 1px 1px 0 #fff"></div>
<div class="t" style="left:756px;top:285px;width:101px;text-align:center">Disable</div>
<div class="a" style="left:756px;top:310px;width:101px;height:28px;background:#f0f0f0;border:1px solid #a0a0a0;box-shadow:inset 1px 1px 0 #fff"></div>
<div class="t" style="left:756px;top:316px;width:101px;text-align:center">Comment</div>
<div class="a" style="left:756px;top:341px;width:101px;height:28px;background:#f0f0f0;border:1px solid #a0a0a0;box-shadow:inset 1px 1px 0 #fff"></div>
<div class="t" style="left:756px;top:347px;width:101px;text-align:center">Copy</div>
<div class="a" style="left:756px;top:372px;width:101px;height:28px;background:#f0f0f0;border:1px solid #a0a0a0;box-shadow:inset 1px 1px 0 #fff"></div>
<div class="t" style="left:756px;top:378px;width:101px;text-align:center">Remove</div>
<div class="a" style="left:420px;top:634px;width:113px;height:20px;border-top:1px solid #a0a0a0;border-left:1px solid #a0a0a0"></div>
<div class="t" style="left:424px;top:639px;">enabled</div>
<div class="a" style="left:536px;top:634px;width:114px;height:20px;border-top:1px solid #a0a0a0;border-left:1px solid #a0a0a0"></div>
<div class="t" style="left:540px;top:639px;color:#b0b0b0">passive</div>
<div class="a" style="left:652px;top:634px;width:210px;height:20px;border-top:1px solid #a0a0a0;border-left:1px solid #a0a0a0"></div>
<div class="t" style="left:656px;top:639px;">State: point to point</div>
<div class="a" style="left:153px;top:651px;width:264px;height:1px;background:#c4c4c4"></div>
<div class="a" style="left:418px;top:651px;width:449px;height:1px;background:#fafafa"></div>
<div class="a" style="left:868px;top:651px;width:498px;height:1px;background:#c4c4c4"></div>
<div class="a" style="left:1365px;top:2px;width:1px;height:650px;background:#c4c4c4"></div>
<div class="a" style="left:0px;top:652px;width:48px;height:1px;background:#202020"></div>
<div class="a" style="left:48px;top:652px;width:288px;height:1px;background:#b8b8b8"></div>
<div class="a" style="left:336px;top:652px;width:1030px;height:1px;background:#1c1c1c"></div>
<div class="a" style="left:-3px;top:214px;width:23px;height:23px;border-radius:50%;background:#fff;box-shadow:1px 2px 4px rgba(0,0,0,.6)"></div>
<div class="a" style="left:-1px;top:216px;width:19px;height:19px;border-radius:50%;background:#ff0000;color:#fff;font-weight:bold;font-size:13px;line-height:19px;text-align:center">1</div>
<div class="a" style="left:134px;top:314px;width:23px;height:23px;border-radius:50%;background:#fff;box-shadow:1px 2px 4px rgba(0,0,0,.6)"></div>
<div class="a" style="left:136px;top:316px;width:19px;height:19px;border-radius:50%;background:#ff0000;color:#fff;font-weight:bold;font-size:13px;line-height:19px;text-align:center">2</div>
<div class="a" style="left:399px;top:56px;width:23px;height:23px;border-radius:50%;background:#fff;box-shadow:1px 2px 4px rgba(0,0,0,.6)"></div>
<div class="a" style="left:401px;top:58px;width:19px;height:19px;border-radius:50%;background:#ff0000;color:#fff;font-weight:bold;font-size:13px;line-height:19px;text-align:center">3</div>
<div class="a" style="left:475px;top:214px;width:23px;height:23px;border-radius:50%;background:#fff;box-shadow:1px 2px 4px rgba(0,0,0,.6)"></div>
<div class="a" style="left:477px;top:216px;width:19px;height:19px;border-radius:50%;background:#ff0000;color:#fff;font-weight:bold;font-size:13px;line-height:19px;text-align:center">4</div>
<div class="a" style="left:440px;top:386px;width:23px;height:23px;border-radius:50%;background:#fff;box-shadow:1px 2px 4px rgba(0,0,0,.6)"></div>
<div class="a" style="left:442px;top:388px;width:19px;height:19px;border-radius:50%;background:#ff0000;color:#fff;font-weight:bold;font-size:13px;line-height:19px;text-align:center">5</div>
<div class="a" style="left:732px;top:185px;width:23px;height:23px;border-radius:50%;background:#fff;box-shadow:1px 2px 4px rgba(0,0,0,.6)"></div>
<div class="a" style="left:734px;top:187px;width:19px;height:19px;border-radius:50%;background:#ff0000;color:#fff;font-weight:bold;font-size:13px;line-height:19px;text-align:center">6</div>
</body></html>
